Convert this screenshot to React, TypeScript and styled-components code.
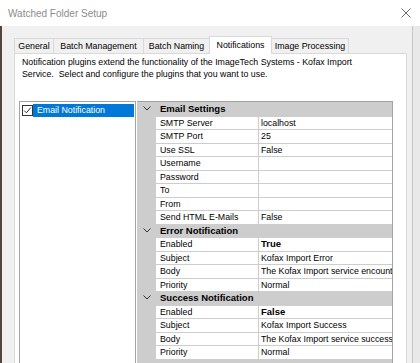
import React from 'react'
import styled, { createGlobalStyle } from 'styled-components'

type Prop = { name: string, value: string, bold?: boolean }
type Section = { title: string, props: Prop[] }

const sections: Section[] = [
    {
        title: 'Email Settings',
        props: [
            { name: 'SMTP Server', value: 'localhost' },
            { name: 'SMTP Port', value: '25' },
            { name: 'Use SSL', value: 'False' },
            { name: 'Username', value: '' },
            { name: 'Password', value: '' },
            { name: 'To', value: '' },
            { name: 'From', value: '' },
            { name: 'Send HTML E-Mails', value: 'False' },
        ]
    },
    {
        title: 'Error Notification',
        props: [
            { name: 'Enabled', value: 'True', bold: true },
            { name: 'Subject', value: 'Kofax Import Error' },
            { name: 'Body', value: 'The Kofax Import service encountered an error.' },
            { name: 'Priority', value: 'Normal' },
        ]
    },
    {
        title: 'Success Notification',
        props: [
            { name: 'Enabled', value: 'False', bold: true },
            { name: 'Subject', value: 'Kofax Import Success' },
            { name: 'Body', value: 'The Kofax Import service successfully imported.' },
            { name: 'Priority', value: 'Normal' },
        ]
    },
]

const tabs = [
    { label: 'General', width: 40 },
    { label: 'Batch Management', width: 91 },
    { label: 'Batch Naming', width: 67 },
    { label: 'Notifications', width: 63, active: true },
    { label: 'Image Processing', width: 78 },
]

export default function App() {
    return (
        <>
            <GlobalStyle />
            <Page>
                <TitleBar>
                    <Title>Watched Folder Setup</Title>
                    <svg width="10" height="10" viewBox="0 0 10 10">
                        <path d="M0.5 0.5 L9.5 9.5 M9.5 0.5 L0.5 9.5" stroke="#6b6b6b" strokeWidth="1" />
                    </svg>
                </TitleBar>
                <Desk>
                    <Body>
                        <TabStrip>
                            {tabs.map((t) => (
                                <Tab key={t.label} $w={t.width} $active={!!t.active}>{t.label}</Tab>
                            ))}
                        </TabStrip>
                        <Panel>
                            <Description>
                                Notification plugins extend the functionality of the ImageTech Systems - Kofax Import<br />
                                Service.&nbsp; Select and configure the plugins that you want to use.
                            </Description>
                            <Content>
                                <ListBox>
                                    <ListItem>
                                        <svg width="11" height="11" viewBox="0 0 11 11">
                                            <rect x="0.5" y="0.5" width="10" height="10" fill="#fff" stroke="#333" />
                                            <path d="M2.2 5.6 L4.4 7.8 L8.8 2.6" fill="none" stroke="#333" strokeWidth="1" />
                                        </svg>
                                        <Selected>Email Notification</Selected>
                                    </ListItem>
                                </ListBox>
                                <Grid>
                                    {sections.map((s) => (
                                        <div key={s.title}>
                                            <CategoryRow>
                                                <Gutter>
                                                    <svg width="8" height="5" viewBox="0 0 8 5">
                                                        <polyline points="0.5,0.5 4,4 7.5,0.5" fill="none" stroke="#333" strokeWidth="1" />
                                                    </svg>
                                                </Gutter>
                                                <CategoryLabel>{s.title}</CategoryLabel>
                                            </CategoryRow>
                                            {s.props.map((p) => (
                                                <PropRow key={s.title + p.name}>
                                                    <NameCell>{p.name}</NameCell>
                                                    <ValueCell $bold={!!p.bold}>{p.value}</ValueCell>
                                                </PropRow>
                                            ))}
                                        </div>
                                    ))}
                                </Grid>
                            </Content>
                        </Panel>
                    </Body>
                    <RightEdge />
                </Desk>
            </Page>
        </>
    )
}

const GlobalStyle = createGlobalStyle`
    html, body {
        margin: 0;
        padding: 0;
        background: #ffffff;
    }
    body {
        font-family: "Liberation Sans", Arial, sans-serif;
        font-size: 8.8px;
        color: #000;
    }
`

const Page = styled.div`
    width: 420px;
    height: 363px;
    overflow: hidden;
    display: flex;
    flex-direction: column;
`

const TitleBar = styled.div`
    height: 26px;
    flex: none;
    background: #ffffff;
    display: flex;
    align-items: center;
    justify-content: space-between;
    padding: 0 9px 0 8px;
    box-sizing: border-box;
`

const Title = styled.div`
    font-size: 10px;
    color: #8c8c8c;
`

const Desk = styled.div`
    flex: 1;
    display: flex;
    min-height: 0;
`

const Body = styled.div`
    width: 412px;
    flex: none;
    background: #f0f0f0;
    border-left: 2px solid #54463c;
    box-sizing: border-box;
    padding: 10px 0 0 12px;
    display: flex;
    flex-direction: column;
`

const RightEdge = styled.div`
    flex: 1;
    background: #e9e9e9;
    border-left: 1px solid #c6c6c6;
`

const TabStrip = styled.div`
    display: flex;
    align-items: flex-end;
    height: 17px;
    flex: none;
`

const Tab = styled.div<{ $w: number, $active: boolean }>`
    position: relative;
    width: ${(p) => p.$w}px;
    height: ${(p) => (p.$active ? 18 : 15)}px;
    margin-right: -1px;
    margin-bottom: ${(p) => (p.$active ? -1 : 0)}px;
    z-index: ${(p) => (p.$active ? 2 : 1)};
    box-sizing: border-box;
    border: 1px solid #d9d9d9;
    border-bottom: none;
    background: ${(p) => (p.$active ? '#ffffff' : '#f0f0f0')};
    display: flex;
    align-items: center;
    justify-content: center;
    white-space: nowrap;
    padding-bottom: ${(p) => (p.$active ? 1 : 0)}px;
`

const Panel = styled.div`
    width: 393px;
    flex: 1;
    box-sizing: border-box;
    background: #ffffff;
    border: 1px solid #d9d9d9;
    border-bottom: none;
`

const Description = styled.div`
    padding: 3px 0 0 7px;
    line-height: 11.5px;
    white-space: nowrap;
`

const Content = styled.div`
    margin-top: 21px;
    padding-left: 4px;
    display: flex;
    align-items: flex-start;
`

const ListBox = styled.div`
    width: 117px;
    height: 280px;
    box-sizing: border-box;
    border: 1px solid #a3a3a3;
    padding: 0 1px 0 2px;
    background: #ffffff;
`

const ListItem = styled.div`
    display: flex;
    align-items: center;
    height: 14px;
    margin-top: 1px;

    svg {
        flex: none;
    }
`

const Selected = styled.div`
    flex: 1;
    height: 13px;
    line-height: 13px;
    background: #0078d7;
    color: #ffffff;
    padding-left: 4px;
    white-space: nowrap;
`

const Grid = styled.div`
    margin-left: 1px;
    width: 256px;
    height: 280px;
    box-sizing: border-box;
    background: #cdcdcd;
    border-top: 1px solid #a3a3a3;
    border-right: 1px solid #a3a3a3;
`

const CategoryRow = styled.div`
    display: flex;
    align-items: center;
    height: 13.5px;
`

const Gutter = styled.div`
    width: 19px;
    flex: none;
    display: flex;
    justify-content: center;
    align-items: center;
`

const CategoryLabel = styled.div`
    padding-left: 4px;
    font-weight: bold;
    font-size: 9.5px;
    white-space: nowrap;
`

const PropRow = styled.div`
    display: flex;
    height: 13.5px;
    padding-left: 19px;
`

const NameCell = styled.div`
    width: 103px;
    flex: none;
    box-sizing: border-box;
    background: #ffffff;
    border-top: 1px solid #cdcdcd;
    border-right: 1px solid #cdcdcd;
    padding-left: 4px;
    line-height: 12.5px;
    white-space: nowrap;
    overflow: hidden;
`

const ValueCell = styled.div<{ $bold: boolean }>`
    flex: 1;
    min-width: 0;
    box-sizing: border-box;
    background: #ffffff;
    border-top: 1px solid #cdcdcd;
    padding-left: 2px;
    line-height: 12.5px;
    white-space: nowrap;
    overflow: hidden;
    font-weight: ${(p) => (p.$bold ? 'bold' : 'normal')};
    font-size: ${(p) => (p.$bold ? '9.5px' : '8.8px')};
`
